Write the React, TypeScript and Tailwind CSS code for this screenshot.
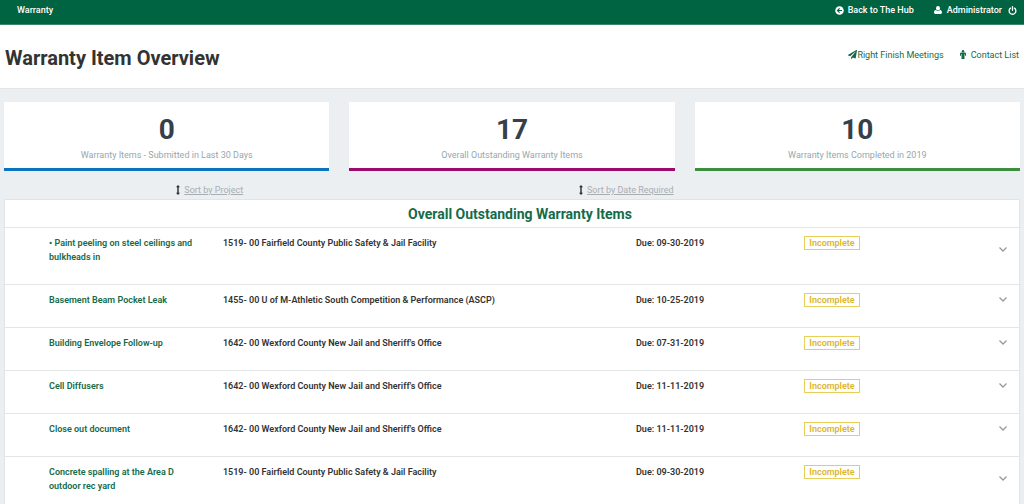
import { FaPaperPlane } from "react-icons/fa";

const stats = [
  { value: 0, label: "Warranty Items - Submitted in Last 30 Days", border: "border-[#0b72bd]" },
  { value: 17, label: "Overall Outstanding Warranty Items", border: "border-[#9c0a6c]" },
  { value: 10, label: "Warranty Items Completed in 2019", border: "border-[#3a903f]" },
];

const items = [
  { name: "• Paint peeling on steel ceilings and bulkheads in", project: "1519- 00 Fairfield County Public Safety & Jail Facility", due: "09-30-2019" },
  { name: "Basement Beam Pocket Leak", project: "1455- 00 U of M-Athletic South Competition & Performance (ASCP)", due: "10-25-2019" },
  { name: "Building Envelope Follow-up", project: "1642- 00 Wexford County New Jail and Sheriff's Office", due: "07-31-2019" },
  { name: "Cell Diffusers", project: "1642- 00 Wexford County New Jail and Sheriff's Office", due: "11-11-2019" },
  { name: "Close out document", project: "1642- 00 Wexford County New Jail and Sheriff's Office", due: "11-11-2019" },
  { name: "Concrete spalling at the Area D outdoor rec yard", project: "1519- 00 Fairfield County Public Safety & Jail Facility", due: "09-30-2019" },
];

function BackIcon() {
  return (
    <svg viewBox="0 0 18 18" className="size-[9px]" aria-hidden="true">
      <circle cx="9" cy="9" r="8.5" fill="currentColor" />
      <path d="M14 9H5.500M9.200 4.800 5 9 9.200 13.200" fill="none" stroke="#006443" strokeWidth="2.4" />
    </svg>
  );
}

function UserIcon() {
  return (
    <svg viewBox="0 0 16 16" className="size-2" fill="currentColor" aria-hidden="true">
      <ellipse cx="8" cy="4.500" rx="4" ry="4.500" />
      <path d="M4 8C1.200 8.400 0 10.500 0 13.200 0 15 1 16 2.600 16h10.800C15 16 16 15 16 13.200 16 10.500 14.800 8.400 12 8 11 9.400 9.600 10 8 10S5 9.400 4 8z" />
    </svg>
  );
}

function PowerIcon() {
  return (
    <svg viewBox="0 0 18 18" className="size-[9px]" fill="none" stroke="currentColor" strokeWidth="2.600" strokeLinecap="round" aria-hidden="true">
      <path d="M5 4.200A6.800 6.800 0 1 0 13 4.200M9 1.500V8.500" />
    </svg>
  );
}

function PersonIcon() {
  return (
    <svg viewBox="0 0 12 18" className="h-[9px] w-[6px]" fill="currentColor" aria-hidden="true">
      <circle cx="6" cy="2.400" r="2.400" />
      <path d="M2.500 5h7A2.500 2.500 0 0 1 12 7.500V11.500H10V8H9V18H3V8H2V11.500H0V7.500A2.500 2.500 0 0 1 2.500 5z" />
    </svg>
  );
}

function SortIcon() {
  return (
    <svg viewBox="0 0 4 10" className="h-[10px] w-1 text-[#222b36]" fill="currentColor" aria-hidden="true">
      <path d="M2 0 4 2.300H2.700V7.700H4L2 10 0 7.700H1.300V2.300H0z" />
    </svg>
  );
}

function ChevronIcon() {
  return (
    <svg viewBox="0 0 16 16" className="size-4" fill="none" stroke="currentColor" strokeWidth="1.3" aria-hidden="true">
      <path d="M4.500 6.500 8 10 11.500 6.500" />
    </svg>
  );
}

export default function App() {
  return (
    <div className="min-h-screen bg-[#ebeff2] font-[Roboto,sans-serif] text-[9px] leading-[14px] text-[#333]">
      <nav className="flex h-[25px] items-center justify-between border-b border-[#3c8768] bg-[#006443] pr-[7px] pl-[17px] pb-1 font-medium text-white">
        <a href="#">Warranty</a>
        <div className="flex items-center gap-5">
          <a href="#" className="flex items-center gap-1">
            <BackIcon />
            Back to The Hub
          </a>
          <div className="flex items-center gap-1.5">
            <a href="#" className="flex items-center gap-[5px]">
              <UserIcon />
              Administrator
            </a>
            <button type="button" aria-label="Log out">
              <PowerIcon />
            </button>
          </div>
        </div>
      </nav>

      <header className="flex h-16 items-center justify-between border-b border-[#e2e6e8] bg-white px-[5px]">
        <h1 className="pt-0.5 text-[20px] leading-7 font-bold">Warranty Item Overview</h1>
        <div className="flex items-center gap-4 pb-1 text-[#156b49]">
          <a href="#" className="flex items-center">
            <FaPaperPlane className="size-[9px]" />
            Right Finish Meetings
          </a>
          <a href="#" className="flex items-center gap-[5px]">
            <PersonIcon />
            Contact List
          </a>
        </div>
      </header>

      <main className="px-1 pt-[13px]">
        <section className="grid grid-cols-3 gap-5">
          {stats.map((s) => (
            <div key={s.label} className={`border-b-3 bg-white pt-3 pb-1.5 text-center ${s.border}`}>
              <p className="text-[28px] leading-8 font-bold text-[#36404a]">{s.value}</p>
              <p className="pt-0.5 text-[#98a6ad]">{s.label}</p>
            </div>
          ))}
        </section>

        <div className="grid grid-cols-[81fr_83fr_36fr] pt-3 pb-0.5 text-center text-[#a9adb0]">
          <button type="button" className="flex items-center justify-center gap-1">
            <SortIcon />
            <span className="underline">Sort by Project</span>
          </button>
          <button type="button" className="flex items-center justify-center gap-1">
            <SortIcon />
            <span className="underline">Sort by Date Required</span>
          </button>
        </div>

        <section className="border border-[#dfe4e6] bg-white">
          <h2 className="h-[27px] pl-4 text-center text-[14px] leading-7 font-bold text-[#156b49]">
            Overall Outstanding Warranty Items
          </h2>
          <table className="w-full table-fixed text-left font-semibold">
            <colgroup>
              <col className="w-[21%]" />
              <col />
              <col className="w-42" />
              <col className="w-[191px]" />
              <col className="w-6" />
            </colgroup>
            <tbody>
              {items.map((item) => (
                <tr key={item.name} className="border-t border-[#e3e6e7] align-top">
                  <td className="pt-2 pr-5 pb-5 pl-11">
                    <a href="#" className="block text-[#156b49]">
                      {item.name}
                    </a>
                  </td>
                  <td className="pt-2 pb-5 pl-[5px]">{item.project}</td>
                  <td className="pt-2 pb-5">Due: {item.due}</td>
                  <td className="pt-2 pb-5">
                    <span className="block w-14 border border-[#e8cf5a] text-center leading-3 text-[#dcb62a]">
                      Incomplete
                    </span>
                  </td>
                  <td className="pt-1.5 pb-5 align-middle">
                    <button type="button" aria-label="Show details" className="block text-[#999]">
                      <ChevronIcon />
                    </button>
                  </td>
                </tr>
              ))}
            </tbody>
          </table>
        </section>
      </main>
    </div>
  );
}
